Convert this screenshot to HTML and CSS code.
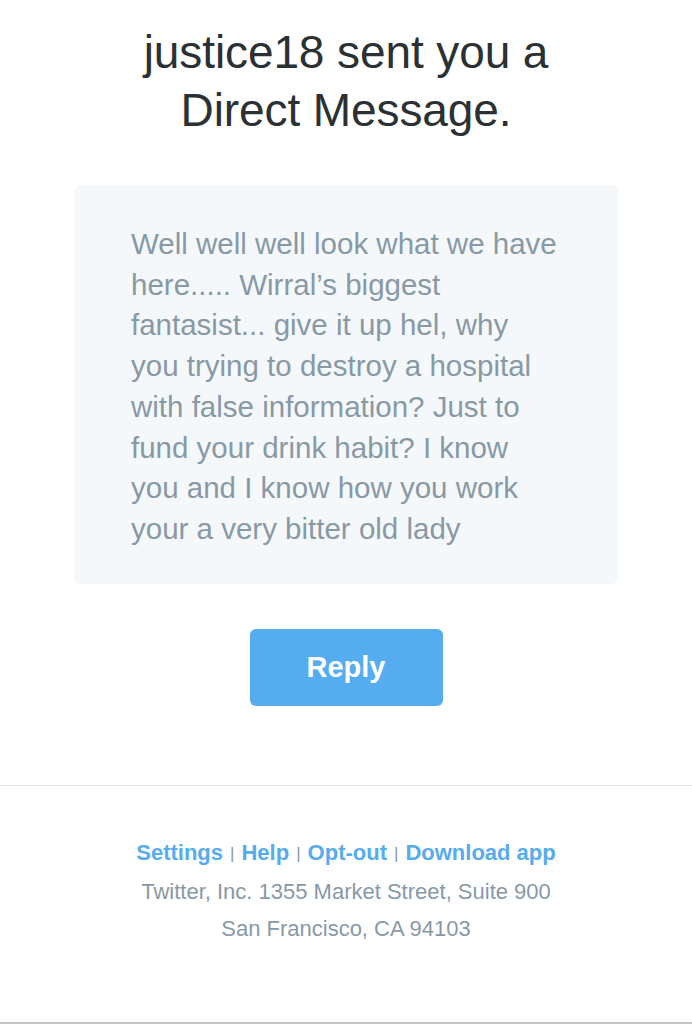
FILE: index.html
```html
<!DOCTYPE html>
<html lang="en">
  <head>
    <meta charset="UTF-8" />
    <meta name="viewport" content="width=device-width, initial-scale=1.0" />
    <title>Direct Message</title>
    <link rel="stylesheet" href="styles.css">
  </head>
  <body>
    <main class="email">
      <h1 class="email__title">justice18 sent you a Direct Message.</h1>

      <div class="dm">
        <p class="dm__text">Well well well look what we have here..... Wirral’s biggest fantasist... give it up hel, why you trying to destroy a hospital with false information? Just to fund your drink habit? I know you and I know how you work your a very bitter old lady</p>
      </div>

      <a class="btn-reply" href="#">Reply</a>

      <footer class="footer">
        <p class="footer__links">
          <a href="#">Settings</a><span class="sep">|</span><a href="#">Help</a><span class="sep">|</span><a href="#">Opt-out</a><span class="sep">|</span><a href="#">Download app</a>
        </p>
        <p class="footer__address">Twitter, Inc. 1355 Market Street, Suite 900<br />San Francisco, CA 94103</p>
      </footer>
    </main>
  </body>
</html>
```

FILE: styles.css
```css
* {
  margin: 0;
  padding: 0;
  box-sizing: border-box;
}

body {
  font-family: 'Liberation Sans', Arial, sans-serif;
  background-color: #fff;
  color: #292f33;
}

.email {
  display: flex;
  flex-direction: column;
  align-items: center;
  min-height: 1024px;
}

.email__title {
  margin-top: 23px;
  width: 440px;
  font-size: 46px;
  font-weight: normal;
  line-height: 58px;
  text-align: center;
  color: #2b3033;
  letter-spacing: -0.1px;
}

.dm {
  margin-top: 46px;
  width: 544px;
  padding: 39px 57px 34px 57px;
  background-color: #f5f8fa;
  border-radius: 7px;
}

.dm__text {
  font-size: 29.5px;
  line-height: 40.7px;
  color: #8899a6;
}

.btn-reply {
  margin-top: 45px;
  width: 193px;
  height: 77px;
  display: flex;
  align-items: center;
  justify-content: center;
  background-color: #55acee;
  border-radius: 6px;
  color: #fff;
  font-size: 29px;
  font-weight: bold;
  text-decoration: none;
}

.footer {
  margin-top: 79px;
  width: 100%;
  flex: 1;
  border-top: 1px solid #e1e8ed;
  border-bottom: 2px solid #c4c4c4;
  padding-top: 48px;
  text-align: center;
  font-size: 22px;
  line-height: 37px;
}

.footer__links {
  margin-bottom: 1px;
}

.footer__links a {
  color: #55acee;
  font-weight: bold;
  text-decoration: none;
}

.sep {
  display: inline-block;
  margin: 0 7px;
  color: #8899a6;
  font-size: 17px;
  vertical-align: 1px;
}

.footer__address {
  color: #8899a6;
}
```
